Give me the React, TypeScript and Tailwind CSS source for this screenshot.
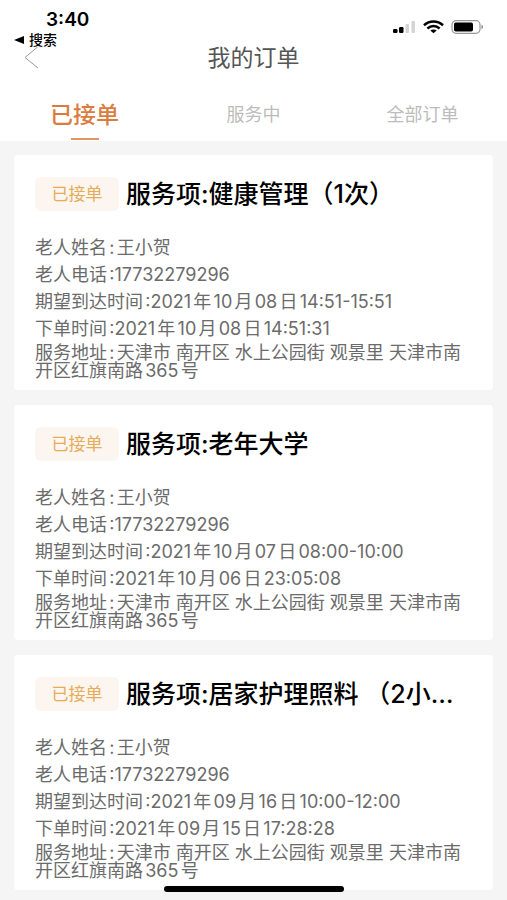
import React from 'react';
import clsx from 'clsx';

interface Order {
  id: number;
  title: string;
  name: string;
  phone: string;
  expected: string;
  created: string;
  address: string;
}

const address = '天津市 南开区 水上公园街 观景里 天津市南开区红旗南路365号';

const orders: Order[] = [
  {
    id: 1,
    title: '健康管理（1次）',
    name: '王小贺',
    phone: '17732279296',
    expected: '2021年10月08日14:51-15:51',
    created: '2021年10月08日14:51:31',
    address,
  },
  {
    id: 2,
    title: '老年大学',
    name: '王小贺',
    phone: '17732279296',
    expected: '2021年10月07日08:00-10:00',
    created: '2021年10月06日23:05:08',
    address,
  },
  {
    id: 3,
    title: '居家护理照料 （2小时）',
    name: '王小贺',
    phone: '17732279296',
    expected: '2021年09月16日10:00-12:00',
    created: '2021年09月15日17:28:28',
    address,
  },
];

const tabs = ['已接单', '服务中', '全部订单'];

const StatusBar: React.FC = () => (
  <div className="flex h-[47px] items-start justify-between pl-[14px] pr-[23px]">
    <div className="flex flex-col pt-[10px] text-black">
      <span className="pl-8 text-[19px] leading-5 font-semibold">3:40</span>
      <a href="#search" className="flex items-center gap-[5px] text-sm leading-5 font-medium">
        <svg width="10" height="8" viewBox="0 0 10 8" aria-hidden="true">
          <path d="M0 4 10 0V8Z" fill="currentColor" />
        </svg>
        搜索
      </a>
    </div>
    <div className="flex items-center gap-[7px] pt-5">
      <svg width="23" height="14" viewBox="0 0 23 14" aria-hidden="true">
        <rect x="0" y="9" width="4.5" height="4" rx="1.2" fill="#000" />
        <rect x="6" y="7" width="4.5" height="6" rx="1.2" fill="#000" />
        <rect x="12.5" y="4" width="3.5" height="9" rx="1" fill="#d4d4d4" />
        <rect x="18.5" y="1" width="3.5" height="12" rx="1" fill="#d4d4d4" />
      </svg>
      <svg width="21" height="14" viewBox="0 0 21 14" aria-hidden="true">
        <g fill="none" stroke="#000" strokeWidth="2.5">
          <path d="M1 5.2C6.5 .3 14.5 .3 20 5.2" />
          <path d="M4.4 8.5C8 5.3 13 5.3 16.6 8.5" />
        </g>
        <path d="M7.3 10.6C9 9 12 9 13.7 10.6L10.5 13.2Z" fill="#000" />
      </svg>
      <svg width="33" height="14" viewBox="0 0 33 14" aria-hidden="true">
        <rect x="1" y=".7" width="28" height="12.6" rx="4" fill="none" stroke="#999" strokeWidth="1.2" />
        <rect x="3" y="2.5" width="19" height="9" rx="1.8" fill="#000" />
        <path d="M30.5 4.8C32.5 5.5 32.5 8.5 30.5 9.2Z" fill="#888" />
      </svg>
    </div>
  </div>
);

const OrderCard: React.FC<{ order: Order }> = ({ order }) => (
  <article className="rounded-sm bg-white pt-[22px] pr-[22px] pb-[10px] pl-[21px]">
    <div className="flex items-center gap-[7px]">
      <span className="flex h-[34px] w-[84px] shrink-0 items-center justify-center rounded-md bg-[#fdf5f0] pt-px text-[17px] text-[#e6ac57]">
        已接单
      </span>
      <h2 className="max-w-[340px] truncate text-[25px] leading-[34px] font-medium text-black">
        服务项:{order.title}
      </h2>
    </div>
    <div className="mt-[23px] text-lg leading-[27px] text-[#6b6b6b] [text-autospace:normal]">
      <p>老人姓名:{order.name}</p>
      <p>老人电话:{order.phone}</p>
      <p>期望到达时间:{order.expected}</p>
      <p>下单时间:{order.created}</p>
      <p className="mt-[2px] leading-[18px]">服务地址:{order.address}</p>
    </div>
  </article>
);

const App: React.FC = () => {
  const [active, setActive] = React.useState(0);

  return (
    <div
      lang="zh-CN"
      className="min-h-screen bg-[#f5f5f5] font-[Inter,'Noto_Sans_CJK_SC',sans-serif]"
    >
      <header className="bg-white">
        <StatusBar />
        <div className="grid h-[22px] grid-cols-[1fr_auto_1fr] items-center">
          <button type="button" aria-label="返回" className="ml-6 w-[15px]">
            <svg width="15" height="22" viewBox="0 0 15 22" fill="none" stroke="#999" aria-hidden="true">
              <path d="M13.5 0 1 10.5 14 21" />
            </svg>
          </button>
          <h1 className="text-[23px] leading-[22px] text-[#555]">我的订单</h1>
        </div>
        <nav className="grid grid-cols-3">
          {tabs.map((tab, i) => (
            <button
              key={tab}
              type="button"
              onClick={() => setActive(i)}
              className={clsx(
                'flex h-[72px] flex-col items-center justify-end pb-px leading-[30px]',
                i === active ? 'text-[23px] font-medium text-[#dc7b40]' : 'text-lg text-[#bcbcbc]'
              )}
            >
              {tab}
              <span className={clsx('mt-2 h-[2px] w-7', i === active && 'bg-[#e09566]')} />
            </button>
          ))}
        </nav>
      </header>

      <main className="flex flex-col gap-[15px] px-[14px] pt-[14px] pb-2">
        {orders.map((order) => (
          <OrderCard key={order.id} order={order} />
        ))}
      </main>

      {/* home indicator */}
      <div className="fixed bottom-2 left-1/2 h-[6px] w-[180px] -translate-x-1/2 rounded-full bg-black" />
    </div>
  );
};

export default App;
